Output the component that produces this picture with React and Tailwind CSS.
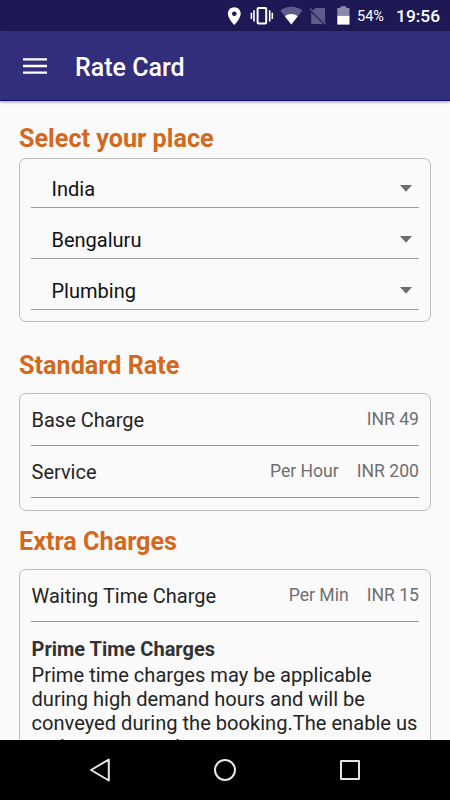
import { useState } from 'react';

const places = ['India', 'Bengaluru', 'Plumbing'];

// Android status bar icons and clock
function StatusBar() {
  return (
    <div className="h-[31px] shrink-0 bg-[#1e1855] flex items-center justify-end pr-[10px] text-white">
      <svg className="w-[132px] h-[31px] mr-[3px]" viewBox="222 0 132 31" fill="none">
        <path d="M234.300 7.300c-3.600 0-6.400 2.800-6.400 6.400 0 4.700 6.400 11.300 6.400 11.300s6.400-6.600 6.400-11.300c0-3.600-2.800-6.400-6.400-6.400z" fill="#fff" />
        <circle cx="234.300" cy="13.700" r="2.300" fill="#1e1855" />
        <rect x="257.600" y="8.100" width="8.600" height="15.400" rx="1" stroke="#fff" strokeWidth="2" />
        <path d="M254 10.200v11.400M269.700 10.200v11.400M251.400 12.700v6.300M272.300 12.700v6.300" stroke="#fff" strokeWidth="1.600" />
        <path d="M280.300 10.500c6.500-4.900 15.500-4.900 22 0L291.300 24.500z" fill="#615c8b" />
        <path d="M284.800 16.200c3.900-2.900 9.100-2.900 13 0L291.300 24.500z" fill="#fff" />
        <path d="M315.500 8H325v14.500L312.700 10.800zM311.200 12.300L323 24H311.200z" fill="#615c8b" />
        <path d="M310 8.500L325.500 24" stroke="#615c8b" strokeWidth="1.500" />
        <path d="M337.300 8h3.200V6.300h5.700V8h3.300v7.600h-12.200z" fill="#8c89ab" />
        <path d="M337.300 15.600h12.200v9h-12.200z" fill="#fff" />
      </svg>
      <span className="w-[27px] text-[14.5px] leading-none whitespace-nowrap mr-[12px] mt-[3px]">54%</span>
      <span className="w-[44px] text-[17.400px] leading-none font-medium mt-[2px]">19:56</span>
    </div>
  );
}

function AppBar() {
  return (
    <header className="relative h-[70px] shrink-0 bg-[#332e7c] border-b border-[#130a77] shadow-[0_1px_3px_rgba(0,0,0,0.4)] flex items-center pl-[23px]">
      <svg className="w-6 h-4" viewBox="0 0 24 16" fill="#fff">
        <path d="M0 0.200h24v2.400H0zM0 6.800h24v2.400H0zM0 13.400h24v2.400H0z" />
      </svg>
      <h1 className="ml-[28px] mt-[4px] text-[25px] font-medium text-white">Rate Card</h1>
    </header>
  );
}

function Heading({ children }) {
  return <h2 className="h-[30px] text-[25.200px] leading-[30px] font-bold text-[#d2691e]">{children}</h2>;
}

function PlaceRow({ value }) {
  return (
    <div className="h-[51px] first:h-[49px] border-b border-[#9e9e9e] pl-[20.500px] pr-[7px] pb-[6.500px] flex items-end justify-between">
      <span className="text-[20px] leading-6 text-[#111]">{value}</span>
      <svg className="w-3 h-[7px] mb-[8.500px]" viewBox="0 0 12 7">
        <path d="M0 0h12L6 6.700z" fill="#6d6d6d" />
      </svg>
    </div>
  );
}

function RateRow({ label, unit, price }) {
  return (
    <div className="h-[52px] border-b border-[#959595] pt-[14px] flex items-start text-[#242424]">
      <span className="text-[20px] leading-6 flex-1 pl-[0.500px]">{label}</span>
      <span className="text-[17.600px] leading-[23px] text-[#6f6f6f]">{unit}</span>
      <span className="text-[17.600px] leading-[23px] text-[#6f6f6f] ml-[18px]">{price}</span>
    </div>
  );
}

export default function App() {
  const [selected] = useState(places);

  return (
    <div className="w-[450px] h-[800px] flex flex-col overflow-hidden bg-[#fafafa] font-['Roboto',sans-serif]">
      <StatusBar />
      <AppBar />

      <main className="flex-1 min-h-0 overflow-hidden px-[19px] pt-[23px]">
        <Heading>Select your place</Heading>
        <section className="mt-[4px] h-[164px] border border-[#bdbdbd] rounded-[7px] px-[11px]">
          {selected.map((place) => (
            <PlaceRow key={place} value={place} />
          ))}
        </section>

        <div className="mt-[29px]">
          <Heading>Standard Rate</Heading>
        </div>
        <section className="mt-[12px] h-[118px] border border-[#bdbdbd] rounded-[7px] px-[11px]">
          <RateRow label="Base Charge" price="INR 49" />
          <RateRow label="Service" unit="Per Hour" price="INR 200" />
        </section>

        <div className="mt-[16px]">
          <Heading>Extra Charges</Heading>
        </div>
        <section className="mt-[12px] h-[240px] border border-[#bdbdbd] rounded-[7px] px-[11px]">
          <RateRow label="Waiting Time Charge" unit="Per Min" price="INR 15" />
          <h3 className="mt-[15px] pl-[0.500px] text-[20px] leading-6 font-bold text-[#333]">Prime Time Charges</h3>
          <p className="mt-[3px] pl-[0.500px] text-[20.100px] leading-[23.900px] text-[#242424] whitespace-nowrap">
            Prime time charges may be applicable<br />
            during high demand hours and will be<br />
            conveyed during the booking.The enable us<br />
            make more vendors
          </p>
        </section>
      </main>

      {/* Android navigation buttons */}
      <nav className="h-[60px] shrink-0 bg-black flex items-center justify-between px-[88px]">
        <svg className="w-6 h-6" viewBox="0 0 24 24" fill="none" stroke="#e6e6e6" strokeWidth="2" strokeLinejoin="round">
          <path d="M20.800 1.500v21L3 12z" />
        </svg>
        <svg className="w-6 h-6" viewBox="0 0 24 24" fill="none" stroke="#e6e6e6" strokeWidth="2">
          <circle cx="12" cy="12" r="10" />
        </svg>
        <svg className="w-6 h-6" viewBox="0 0 24 24" fill="none" stroke="#e6e6e6" strokeWidth="2" strokeLinejoin="round">
          <path d="M3 3h18v18H3z" />
        </svg>
      </nav>
    </div>
  );
}
